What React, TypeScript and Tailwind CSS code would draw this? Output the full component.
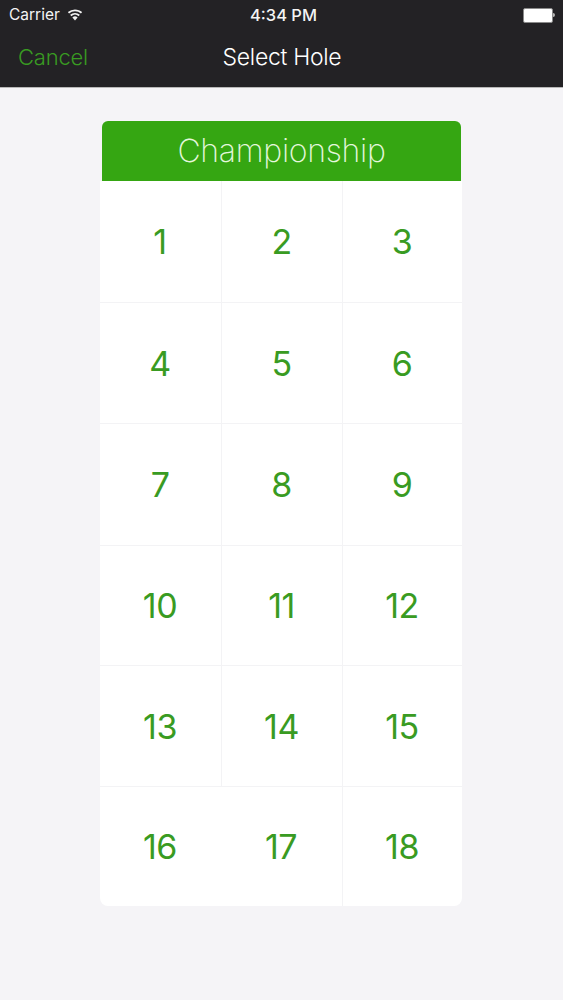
const holes = [1, 2, 3, 4, 5, 6, 7, 8, 9, 10, 11, 12, 13, 14, 15, 16, 17, 18];

function WifiIcon() {
  return (
    <svg width="18" height="13" viewBox="0 0 16 12" fill="#f2f2f2" className="mb-[2px] -ml-[2px]">
      <path d="M8 11.6 5.6 8.7a3.7 3.7 0 0 1 4.8 0Z" />
      <path d="M4.6 7.5 3.5 6.2a7 7 0 0 1 9 0l-1.1 1.3a5.3 5.3 0 0 0-6.8 0Z" />
      <path d="M2.5 5 1.4 3.7A10.2 10.2 0 0 1 8 1.3c2.5 0 4.8.9 6.6 2.4L13.5 5A8.6 8.6 0 0 0 8 3a8.6 8.6 0 0 0-5.5 2Z" />
    </svg>
  );
}

function Battery() {
  return (
    <div className="flex items-center">
      <div className="w-[30px] h-[15px] bg-white rounded-[2px] border border-[#8a8a8a]" />
      <div className="w-[2px] h-[4px] bg-[#b5b5b5] rounded-r-sm" />
    </div>
  );
}

export default function App() {
  return (
    <div className="min-h-[1000px] bg-[#f5f4f7] font-['Inter','Liberation_Sans',sans-serif]">
      <div className="h-[88px] bg-[#232225] border-b border-[#b8b8b8]">
        <div className="h-[30px] pl-[9px] pr-[8px] grid grid-cols-3 items-center text-[#f4f4f4] text-[15.5px]">
          <div className="flex items-center gap-[8px]">
            <span>Carrier</span>
            <WifiIcon />
          </div>
          <div className="text-center ml-[3px] text-[16.5px] font-medium whitespace-nowrap">4:34 PM</div>
          <div className="flex justify-end">
            <Battery />
          </div>
        </div>
        <div className="h-[57px] pb-[2px] pl-[18px] pr-[17px] grid grid-cols-3 items-center text-[22px]">
          <div className="text-[#399b22] font-light tracking-[-0.2px]">Cancel</div>
          <div className="text-center text-[23px] text-white font-light tracking-[-0.3px] whitespace-nowrap">Select Hole</div>
        </div>
      </div>

      <div className="w-[362px] ml-[100px] mt-[33px]">
        <div className="ml-[2px] mr-[1px] h-[60px] bg-[#35a612] rounded-t-[6px] flex items-center justify-center text-[32px] font-extralight text-[#e4f7dc] tracking-[-0.3px]">
          Championship
        </div>
        <div className="grid grid-cols-[121px_121px_120px] grid-rows-[121px_121px_122px_120px_121px_120px] bg-white rounded-b-[8px] overflow-hidden">
          {holes.map((hole) => (
            <div
              key={hole}
              className={
                'flex items-center justify-center pr-[1px] text-[34px] text-[#399b22] tracking-[-0.5px] ' +
                (hole % 3 !== 1 && hole !== 17 ? 'border-l border-[#f3f3f5] ' : '') +
                (hole > 3 ? 'border-t border-[#f3f3f5]' : '')
              }
            >
              {hole}
            </div>
          ))}
        </div>
      </div>
    </div>
  );
}
